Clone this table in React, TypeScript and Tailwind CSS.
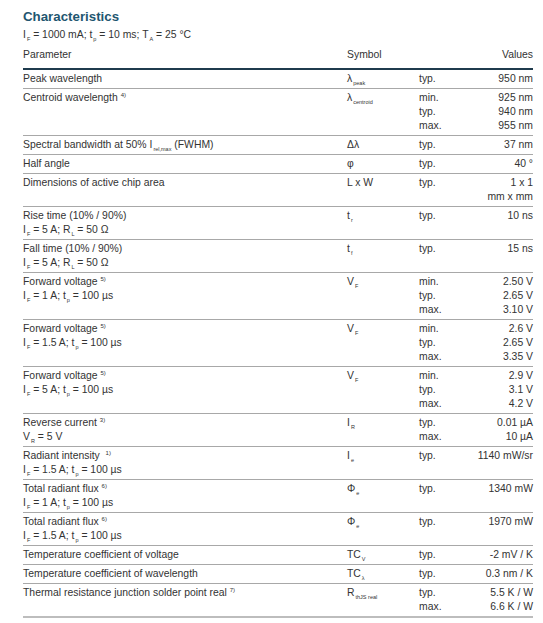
import type { ReactNode } from 'react';

interface Row {
  param: ReactNode[];
  sym: ReactNode;
  conds: string[];
  vals: string[];
}

function Sub({ children }: { children: ReactNode }) {
  return <span className="relative top-[3px] ml-[1px] text-[5.5px] leading-[0]">{children}</span>;
}

function Sup({ children }: { children: ReactNode }) {
  return <span className="relative -top-[4px] text-[6px] leading-[0]">{children}</span>;
}

const fv = (cond: ReactNode): ReactNode[] => [
  <>
    Forward voltage <Sup>5)</Sup>
  </>,
  cond,
];

const rows: Row[] = [
  { param: ['Peak wavelength'], sym: <>λ<Sub>peak</Sub></>, conds: ['typ.'], vals: ['950 nm'] },
  {
    param: [<>Centroid wavelength <Sup>4)</Sup></>],
    sym: <>λ<Sub>centroid</Sub></>,
    conds: ['min.', 'typ.', 'max.'],
    vals: ['925 nm', '940 nm', '955 nm'],
  },
  {
    param: [<>Spectral bandwidth at 50% I<Sub>rel,max</Sub> (FWHM)</>],
    sym: 'Δλ',
    conds: ['typ.'],
    vals: ['37 nm'],
  },
  { param: ['Half angle'], sym: 'φ', conds: ['typ.'], vals: ['40 °'] },
  {
    param: ['Dimensions of active chip area'],
    sym: 'L x W',
    conds: ['typ.'],
    vals: ['1 x 1', 'mm x mm'],
  },
  {
    param: ['Rise time (10% / 90%)', <>I<Sub>F</Sub> = 5 A; R<Sub>L</Sub> = 50 Ω</>],
    sym: <>t<Sub>r</Sub></>,
    conds: ['typ.'],
    vals: ['10 ns'],
  },
  {
    param: ['Fall time (10% / 90%)', <>I<Sub>F</Sub> = 5 A; R<Sub>L</Sub> = 50 Ω</>],
    sym: <>t<Sub>f</Sub></>,
    conds: ['typ.'],
    vals: ['15 ns'],
  },
  {
    param: fv(<>I<Sub>F</Sub> = 1 A; t<Sub>p</Sub> = 100 µs</>),
    sym: <>V<Sub>F</Sub></>,
    conds: ['min.', 'typ.', 'max.'],
    vals: ['2.50 V', '2.65 V', '3.10 V'],
  },
  {
    param: fv(<>I<Sub>F</Sub> = 1.5 A; t<Sub>p</Sub> = 100 µs</>),
    sym: <>V<Sub>F</Sub></>,
    conds: ['min.', 'typ.', 'max.'],
    vals: ['2.6 V', '2.65 V', '3.35 V'],
  },
  {
    param: fv(<>I<Sub>F</Sub> = 5 A; t<Sub>p</Sub> = 100 µs</>),
    sym: <>V<Sub>F</Sub></>,
    conds: ['min.', 'typ.', 'max.'],
    vals: ['2.9 V', '3.1 V', '4.2 V'],
  },
  {
    param: [<>Reverse current <Sup>3)</Sup></>, <>V<Sub>R</Sub> = 5 V</>],
    sym: <>I<Sub>R</Sub></>,
    conds: ['typ.', 'max.'],
    vals: ['0.01 µA', '10 µA'],
  },
  {
    param: [<>Radiant intensity &nbsp;<Sup>1)</Sup></>, <>I<Sub>F</Sub> = 1.5 A; t<Sub>p</Sub> = 100 µs</>],
    sym: <>I<Sub>e</Sub></>,
    conds: ['typ.'],
    vals: ['1140 mW/sr'],
  },
  {
    param: [<>Total radiant flux <Sup>6)</Sup></>, <>I<Sub>F</Sub> = 1 A; t<Sub>p</Sub> = 100 µs</>],
    sym: <>Φ<Sub>e</Sub></>,
    conds: ['typ.'],
    vals: ['1340 mW'],
  },
  {
    param: [<>Total radiant flux <Sup>6)</Sup></>, <>I<Sub>F</Sub> = 1.5 A; t<Sub>p</Sub> = 100 µs</>],
    sym: <>Φ<Sub>e</Sub></>,
    conds: ['typ.'],
    vals: ['1970 mW'],
  },
  {
    param: ['Temperature coefficient of voltage'],
    sym: <>TC<Sub>V</Sub></>,
    conds: ['typ.'],
    vals: ['-2 mV / K'],
  },
  {
    param: ['Temperature coefficient of wavelength'],
    sym: <>TC<Sub>λ</Sub></>,
    conds: ['typ.'],
    vals: ['0.3 nm / K'],
  },
  {
    param: [<>Thermal resistance junction solder point real <Sup>7)</Sup></>],
    sym: <>R<Sub>thJS real</Sub></>,
    conds: ['typ.', 'max.'],
    vals: ['5.5 K / W', '6.6 K / W'],
  },
];

export default function App() {
  return (
    <div className="min-h-screen bg-white pl-[23px] pt-[9px] font-['Liberation_Sans',Arial,sans-serif] text-[#333]">
      <div className="w-[510px]">
        <h1 className="text-[13.3px] font-bold leading-[16px] text-[#1f5670]">Characteristics</h1>
        <p className="mt-[3px] text-[10.4px] leading-[14px]">
          I<Sub>F</Sub> = 1000 mA; t<Sub>p</Sub> = 10 ms; T<Sub>A</Sub> = 25 °C
        </p>

        {/* header */}
        <div className="mt-[6px] grid grid-cols-[324px_72px_1fr_auto] border-b-2 border-[#1f3b4d] pb-[6px] text-[10.4px] leading-[14px]">
          <div>Parameter</div>
          <div>Symbol</div>
          <div />
          <div className="text-right">Values</div>
        </div>

        {rows.map((row, i) => (
          <div
            key={i}
            className={
              'grid grid-cols-[324px_72px_1fr_auto] py-[2px] text-[10.4px] leading-[14px] ' +
              (i === rows.length - 1 ? 'border-b-2 border-[#bdbdbd]' : 'border-b border-[#a8a8a8]')
            }
          >
            <div>
              {row.param.map((p, j) => (
                <div key={j}>{p}</div>
              ))}
            </div>
            <div>{row.sym}</div>
            <div>
              {row.conds.map((c) => (
                <div key={c}>{c}</div>
              ))}
            </div>
            <div className="text-right">
              {row.vals.map((v) => (
                <div key={v}>{v}</div>
              ))}
            </div>
          </div>
        ))}
      </div>
    </div>
  );
}
